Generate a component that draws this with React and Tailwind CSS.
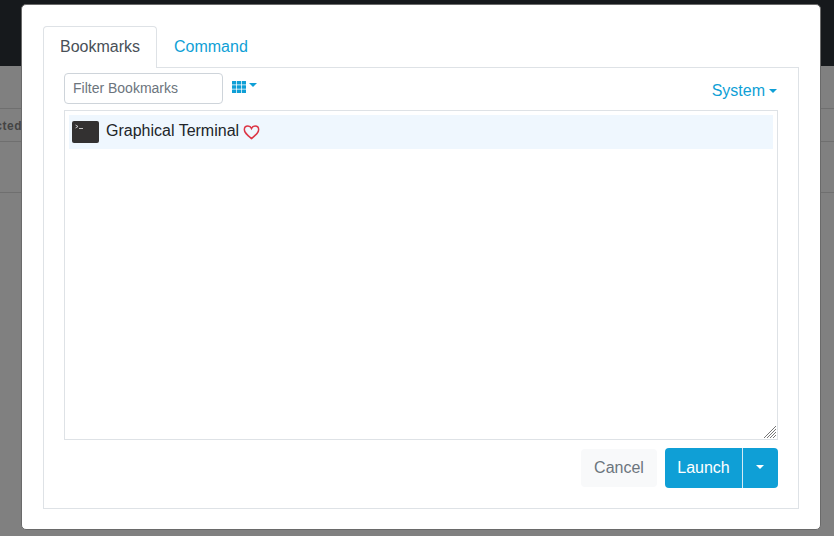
const font = { fontFamily: '"Liberation Sans", Arial, sans-serif' };

function Caret({ className }) {
  return <span className={`inline-block border-x-[4px] border-t-[4px] border-x-transparent ${className}`} />;
}

function GridIcon() {
  return (
    <svg width="14" height="12" viewBox="0 0 14 12" fill="#0f9fd6">
      {[0, 4.2, 8.4].map((y) =>
        [0, 4.9, 9.8].map((x) => <rect key={`${x}-${y}`} x={x} y={y} width="4.2" height="3.6" rx="0.3" />)
      )}
    </svg>
  );
}

function TerminalIcon() {
  return (
    <div className="flex h-[22px] w-[27px] shrink-0 items-start rounded-[2px] bg-[#333131] pl-[3px] pt-[2px]">
      <svg width="12" height="8" viewBox="0 0 12 8" fill="none" stroke="#e8e8e8" strokeWidth="0.8">
        <path d="M0.5 2 L3 3.5 L0.5 5" />
        <path d="M4 5.5 H8" />
      </svg>
    </div>
  );
}

function Heart() {
  return (
    <svg width="17" height="15" viewBox="0 0 24 22" fill="none" stroke="#dc3545" strokeWidth="2.2">
      <path d="M12 20 C5 14 1.5 11 1.5 6.8 C1.5 3.6 4 1.5 6.8 1.5 C9 1.5 11 2.7 12 5 C13 2.7 15 1.5 17.2 1.5 C20 1.5 22.5 3.6 22.5 6.8 C22.5 11 19 14 12 20 Z" />
    </svg>
  );
}

function Backdrop() {
  return (
    <div className="absolute inset-0 flex flex-col bg-[#808080]">
      <div className="h-[66px] bg-[#16191c]" />
      <div className="mt-[42px] h-[34px] border-y border-[#6f6f6f]">
        <div className="flex w-[22px] justify-end overflow-hidden whitespace-nowrap pt-[8px] text-[12px] font-bold tracking-[0.5px] text-[#444]">cted</div>
      </div>
      <div className="mt-[50px] border-t border-[#6f6f6f]" />
    </div>
  );
}

export default function App() {
  return (
    <div className="relative h-[536px] w-[834px] overflow-hidden" style={font}>
      <Backdrop />
      <div className="relative ml-[21px] mt-[4px] h-[526px] w-[800px] rounded-[5px] border border-[#6a6a6a] bg-white px-[21px] pt-[20px]">
        {/* Tabs */}
        <div className="flex h-[42px] items-end text-[16px]">
          <div className="relative z-10 -mb-px flex h-[42px] w-[114px] items-center justify-center rounded-t-[4px] border border-b-0 border-[#dee2e6] bg-white pb-px text-[#495057]">
            Bookmarks
          </div>
          <div className="flex h-[41px] items-center pl-[17px] text-[#0f9fd6]">Command</div>
        </div>

        <div className="h-[442px] w-[756px] border border-[#dee2e6] px-5">
          {/* Toolbar */}
          <div className="flex items-start justify-between pt-[5px]">
            <div className="flex items-center gap-[9px]">
              <input
                readOnly
                placeholder="Filter Bookmarks"
                className="h-[31px] w-[159px] rounded-[4px] border border-[#ced4da] px-2 pb-[2px] text-[14px] text-[#495057] outline-none placeholder:text-[#6c757d]"
              />
              <div className="-mt-[4px] flex items-center gap-[3px]">
                <GridIcon />
                <Caret className="mb-[3px] border-t-[#0f9fd6]" />
              </div>
            </div>
            <div className="mr-px mt-[6px] flex items-center gap-[4px] text-[16px] text-[#0f9fd6]">
              System
              <Caret className="border-t-[#0f9fd6]" />
            </div>
          </div>

          {/* Bookmark list */}
          <div className="relative mt-[6px] h-[330px] w-[714px] border border-[#dee2e6] p-1">
            <div className="flex h-[34px] items-center bg-[#eff7fe] pl-[3px] text-[16px] text-[#212529]">
              <TerminalIcon />
              <span className="ml-[7px] pb-[3px]">Graphical Terminal</span>
              <span className="ml-[4px]"><Heart /></span>
            </div>
            <svg className="absolute bottom-0 right-0" width="14" height="14" viewBox="0 0 14 14" stroke="#777" strokeWidth="1">
              <path d="M1 13 L13 1 M4 13 L13 4 M7 13 L13 7 M10 13 L13 10" />
            </svg>
          </div>

          {/* Actions */}
          <div className="mt-2 flex items-start justify-end gap-2">
            <button className="mt-px h-[38px] w-[76px] rounded-[4px] bg-[#f8f9fa] text-[16px] text-[#6c757d]">Cancel</button>
            <div className="flex h-10 overflow-hidden rounded-[4px] bg-[#0f9fd6] text-[16px] text-white">
              <button className="w-[78px] border-r border-[#d5eaf4]">Launch</button>
              <button className="flex w-[35px] items-center justify-center pb-[3px] pr-px">
                <Caret className="border-t-white" />
              </button>
            </div>
          </div>
        </div>
      </div>
    </div>
  );
}
